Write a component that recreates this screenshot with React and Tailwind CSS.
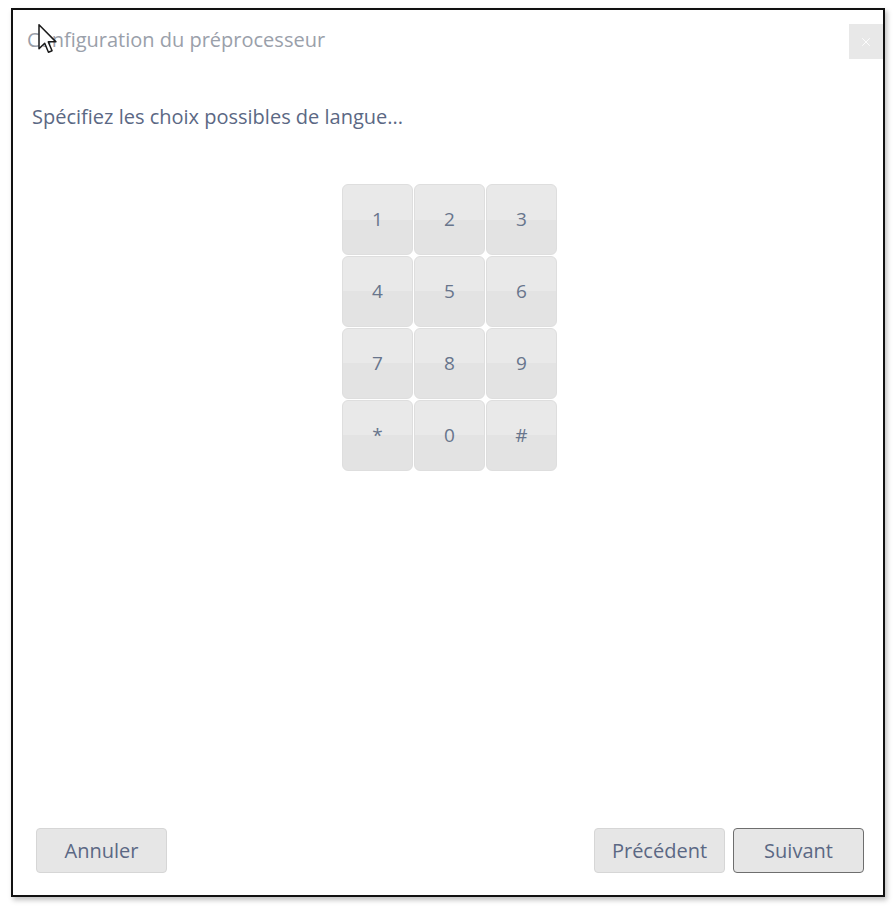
import { X } from 'lucide-react';

const KEYS = ['1', '2', '3', '4', '5', '6', '7', '8', '9', '*', '0', '#'];

const FONT = 'font-["Open_Sans","Noto_Sans",sans-serif]';

function Cursor() {
  // mouse pointer left on top of the title in the screenshot
  return (
    <svg
      className="absolute left-[38px] top-[24px]"
      width="20"
      height="30"
      viewBox="0 0 13 20"
    >
      <path
        d="M0.5 0.5 L0.5 16.5 L4.3 12.8 L6.8 18.8 L9.2 17.8 L6.7 11.9 L11.8 11.9 Z"
        fill="#fff"
        stroke="#1a1a1a"
        strokeWidth="1"
        strokeLinejoin="round"
      />
    </svg>
  );
}

function Key({ label }) {
  return (
    <button className="flex h-[71px] w-[71px] items-center justify-center rounded-[6px] border border-[#dedede] bg-[linear-gradient(to_bottom,#e9e9e9_50%,#e3e3e3_50%)] text-[19px] text-[#68758c]">
      {label}
    </button>
  );
}

function FooterButton({ children, primary }) {
  return (
    <button
      className={
        'flex h-[45px] w-[131px] items-center justify-center rounded-[4px] bg-[#e6e6e6] text-[20px] text-[#5b6884] ' +
        (primary ? 'border-[1.5px] border-[#6e6e6e]' : 'border border-[#d6d6d6]')
      }
    >
      {children}
    </button>
  );
}

export default function App() {
  return (
    <div className={'relative h-[912px] w-[896px] bg-white pl-[11px] pt-[8px] ' + FONT}>
      <div className="flex h-[889px] w-[874px] flex-col border-2 border-[#111] bg-white shadow-[2px_3px_5px_rgba(0,0,0,0.25)]">
        <div className="flex items-start justify-between">
          <h1 className="mt-[17px] pl-[14px] text-[20px] leading-[26px] text-[#9aa0aa]">
            Configuration du préprocesseur
          </h1>
          <button className="mt-[14px] flex h-[35px] w-[34px] items-center justify-center bg-[#e8e8e8] text-white">
            <X size={14} strokeWidth={1.5} />
          </button>
        </div>

        <p className="mt-[45px] pl-[19px] text-[20px] leading-[26px] text-[#5b6884]">
          Spécifiez les choix possibles de langue...
        </p>

        <div className="mt-[54px] flex justify-center pl-[3px]">
          <div className="grid grid-cols-3 gap-[1px]">
            {KEYS.map((k) => (
              <Key key={k} label={k} />
            ))}
          </div>
        </div>

        <div className="mt-auto flex items-center justify-between pb-[22px] pl-[23px] pr-[19px]">
          <FooterButton>Annuler</FooterButton>
          <div className="flex gap-[8px]">
            <FooterButton>Précédent</FooterButton>
            <FooterButton primary>Suivant</FooterButton>
          </div>
        </div>
      </div>
      <Cursor />
    </div>
  );
}
